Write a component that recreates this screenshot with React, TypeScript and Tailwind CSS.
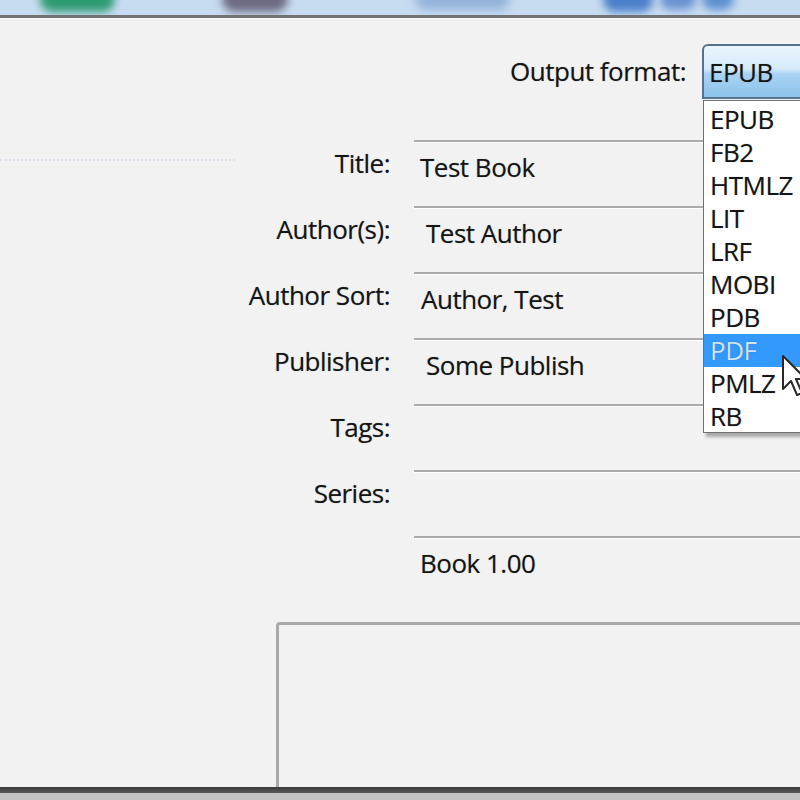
import React from "react";

const formats = ["EPUB", "FB2", "HTMLZ", "LIT", "LRF", "MOBI", "PDB", "PDF", "PMLZ", "RB"];

const fields = [
  { label: "Title:", value: "Test Book", pad: "pl-[6px]" },
  { label: "Author(s):", value: "Test Author", pad: "pl-[12px]" },
  { label: "Author Sort:", value: "Author, Test", pad: "pl-[7px]" },
  { label: "Publisher:", value: "Some Publish", pad: "pl-[12px]" },
  { label: "Tags:", value: "", pad: "pl-[6px]" },
  { label: "Series:", value: "", pad: "pl-[6px]" },
];

function Cursor() {
  return (
    <svg className="absolute left-[782px] top-[355px]" width="26" height="44" viewBox="0 0 13 22">
      <path
        d="M0.5 0.5 L0.5 17 L4.5 13 L7.5 20 L10 19 L7 12 L12 12 Z"
        fill="#ffffff"
        stroke="#2a2a2a"
        strokeWidth="1"
        strokeLinejoin="round"
      />
    </svg>
  );
}

export default function App() {
  return (
    <div className="relative h-[800px] w-[800px] overflow-hidden bg-[#f2f2f2] font-['Open_Sans','Noto_Sans',sans-serif] text-[26px] leading-[32px] tracking-[-0.5px] text-[#151515] [text-shadow:0_0_1px_rgba(0,0,0,0.35)]">
      {/* toolbar edge, cropped */}
      <div className="relative h-[15px] overflow-hidden bg-[#c8dcf1]">
        <div className="absolute left-[40px] top-[-14px] h-[26px] w-[75px] rounded-full bg-[#2e9a72] blur-[4px]" />
        <div className="absolute left-[222px] top-[-14px] h-[26px] w-[66px] rounded-full bg-[#6d6b82] blur-[4px]" />
        <div className="absolute left-[415px] top-[-14px] h-[24px] w-[95px] rounded-full bg-[#93b2da] blur-[5px]" />
        <div className="absolute left-[603px] top-[-12px] h-[24px] w-[50px] rounded-full bg-[#4c7fc9] blur-[4px]" />
        <div className="absolute left-[660px] top-[-12px] h-[22px] w-[36px] rounded-full bg-[#6b93d2] blur-[4px]" />
        <div className="absolute left-[702px] top-[-12px] h-[22px] w-[32px] rounded-full bg-[#5f8fd0] blur-[4px]" />
      </div>
      <div className="h-[3px] bg-[#727272]" />
      <div className="h-px bg-[#fbfbfb]" />

      {/* output format */}
      <div className="flex h-[121px] items-start justify-end pt-[25px]">
        <div className="flex h-[55px] items-center">
          <span className="pb-[2px]">Output format:</span>
        </div>
        <div className="ml-[16px] flex h-[55px] w-[98px] shrink-0 items-center rounded-tl-[6px] border-2 border-r-0 border-[#56718a] bg-[linear-gradient(180deg,#eaf5fd_0%,#d6ebfa_45%,#a9d3f3_55%,#8cc2ea_100%)] pl-[5px]">
          EPUB
        </div>
      </div>

      {/* fields */}
      {fields.map((f, i) => (
        <div key={f.label} className="flex h-[66px]">
          <div className="flex w-[390px] shrink-0 items-start pt-[7px]">
            {i === 0 ? (
              <div className="mt-[12px] w-[235px] border-t-2 border-dotted border-[#dde3ee]" />
            ) : null}
            <span className="ml-auto">{f.label}</span>
          </div>
          <div
            className={`ml-[24px] flex-1 border-t-2 border-[#ababab] pt-[9px] shadow-[inset_0_1px_0_#ffffff] ${f.pad}`}
          >
            {f.value}
          </div>
        </div>
      ))}
      <div className="flex h-[86px]">
        <div className="w-[390px] shrink-0" />
        <div className="ml-[24px] flex-1 border-t-2 border-[#ababab] pl-[6px] pt-[9px] shadow-[inset_0_1px_0_#ffffff]">
          Book 1.00
        </div>
      </div>

      {/* comments box */}
      <div className="ml-[276px] h-[165px] rounded-tl-[4px] border-l-[3px] border-t-[3px] border-[#a9a9a9]" />

      {/* window bottom edge */}
      <div className="h-[6px] bg-[linear-gradient(180deg,#3a3a3a,#5a5a5a)]" />
      <div className="h-[7px] bg-[#c4c4c4]" />

      {/* open dropdown list */}
      <div className="absolute left-[703px] top-[100px] h-[333px] w-[120px] border border-[#6f6f6f] bg-white pt-[2px] shadow-[3px_4px_3px_rgba(0,0,0,0.3)]">
        {formats.map((f) => (
          <div
            key={f}
            className={`h-[33px] pl-[6px] leading-[33px] ${f === "PDF" ? "bg-[#3399ff] text-[#cfe5fb]" : ""}`}
          >
            {f}
          </div>
        ))}
      </div>

      <Cursor />
    </div>
  );
}
